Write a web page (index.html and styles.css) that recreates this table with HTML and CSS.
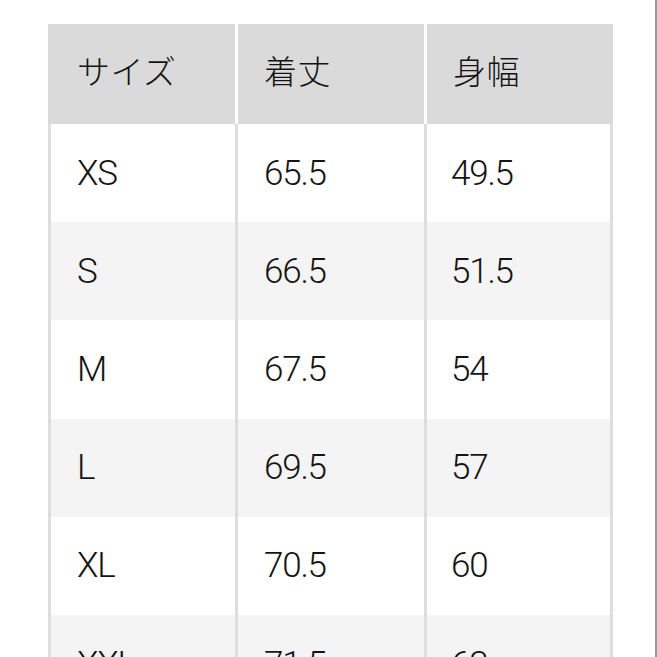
FILE: index.html
```html
<!DOCTYPE html>
<html lang="ja">
<head>
<meta charset="utf-8">
<link rel="stylesheet" href="styles.css">
</head>
<body>
<div class="page">
  <div class="table">
    <div class="head">
      <div class="hcell first">サイズ</div>
      <div class="hcell">着丈</div>
      <div class="hcell">身幅</div>
    </div>
    <div class="body">
      <div class="cell">XS</div><div class="cell">65.5</div><div class="cell c3">49.5</div>
      <div class="cell alt">S</div><div class="cell alt">66.5</div><div class="cell alt c3">51.5</div>
      <div class="cell">M</div><div class="cell">67.5</div><div class="cell c3">54</div>
      <div class="cell alt">L</div><div class="cell alt">69.5</div><div class="cell alt c3">57</div>
      <div class="cell">XL</div><div class="cell">70.5</div><div class="cell c3">60</div>
      <div class="cell alt">XXL</div><div class="cell alt">71.5</div><div class="cell alt c3">63</div>
    </div>
  </div>
</div>
</body>
</html>
```
FILE: styles.css
```css
html, body {
  margin: 0;
  padding: 0;
  background: #fff;
  overflow: hidden;
}
.page {
  height: 657px;
  width: 657px;
  border-right: 2px solid #9a9a9a;
  box-sizing: border-box;
  padding: 24px 0 0 48px;
  font-family: Roboto, "Noto Sans CJK JP", sans-serif;
  color: #141414;
}
.table {
  width: 565px;
}
.head {
  display: grid;
  grid-template-columns: 187px 186px 186px;
  column-gap: 3px;
  height: 100px;
}
.hcell {
  background: #dadada;
  display: flex;
  align-items: center;
  padding-left: 26px;
  font-family: "Noto Sans CJK JP", sans-serif;
  font-size: 33px;
  font-weight: 300;
  letter-spacing: 0.5px;
  padding-bottom: 8px;
  box-sizing: border-box;
}
.hcell.first {
  padding-left: 29px;
}
.body {
  display: grid;
  grid-template-columns: 184px 186px 183px;
  grid-auto-rows: 98.2px;
  column-gap: 3px;
  padding: 0 3px;
  background: #dddddd;
}
.cell {
  background: #fff;
  display: flex;
  align-items: center;
  padding-left: 26px;
  font-size: 35px;
  font-weight: 300;
  letter-spacing: -1.2px;
}
.cell.c3 {
  padding-left: 24px;
}
.cell.alt {
  background: #f4f4f4;
}
```
